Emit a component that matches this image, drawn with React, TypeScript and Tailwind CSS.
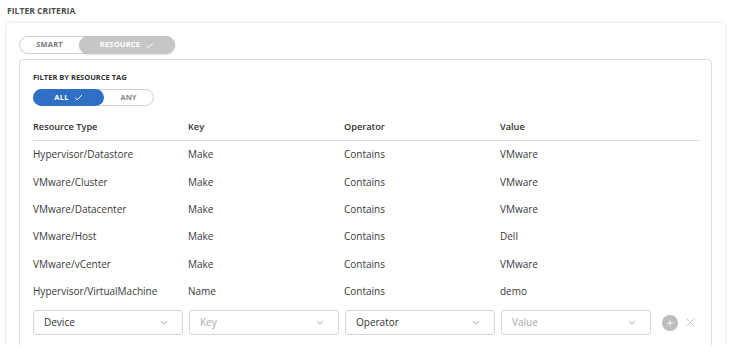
import React from 'react';

const rows = [
  ['Hypervisor/Datastore', 'Make', 'Contains', 'VMware'],
  ['VMware/Cluster', 'Make', 'Contains', 'VMware'],
  ['VMware/Datacenter', 'Make', 'Contains', 'VMware'],
  ['VMware/Host', 'Make', 'Contains', 'Dell'],
  ['VMware/vCenter', 'Make', 'Contains', 'VMware'],
  ['Hypervisor/VirtualMachine', 'Name', 'Contains', 'demo'],
];

function Check({ className }: { className?: string }) {
  return (
    <svg viewBox="0 0 12 10" className={className} fill="none" stroke="currentColor" strokeWidth="1.4">
      <path d="M1 5.2 L4.2 8.2 L11 1.5" />
    </svg>
  );
}

function Chevron() {
  return (
    <svg viewBox="0 0 10 6" className="w-[8px] h-[5px] text-[#999]" fill="none" stroke="currentColor" strokeWidth="1">
      <path d="M1 1 L5 5 L9 1" />
    </svg>
  );
}

function Select({ label, placeholder }: { label: string; placeholder?: boolean }) {
  return (
    <div className="w-[150px] h-[25px] border border-[#d6d6d6] rounded-[3px] flex items-center justify-between pl-[10px] pr-[14px] bg-white">
      <span className={`text-[10px] ${placeholder ? 'text-[#a8a8a8]' : 'text-[#333]'}`}>{label}</span>
      <Chevron />
    </div>
  );
}

export default function App() {
  return (
    <div className="w-[740px] h-[362px] bg-white overflow-hidden text-[#333]" style={{ fontFamily: '"Open Sans", "Noto Sans", sans-serif' }}>
      <div className="pl-[7px] pt-[4px] h-[18px] text-[8.6px] font-bold text-[#505050] leading-[14px]">
        FILTER CRITERIA
      </div>

      <div className="h-[327px] overflow-hidden pt-[5px] pl-[7px] pr-[15px]">
        <div className="h-[360px] bg-white rounded-[4px] shadow-[0_0_5px_rgba(0,0,0,0.13)] pt-[13px] pl-[12px] pr-[13px]">
          {/* Filter mode */}
          <div className="flex w-[156px] h-[18px] border border-[#cfcfcf] rounded-full">
            <div className="w-[59px] flex items-center justify-center text-[7.5px] font-bold text-[#777] tracking-[0.2px]">
              SMART
            </div>
            <div className="flex-1 -my-px -mr-px rounded-full bg-[#c6c6c6] flex items-center justify-center gap-[5px] text-[7.5px] font-bold text-white tracking-[0.2px] shadow-[0_1px_2px_rgba(0,0,0,0.12)]">
              RESOURCE
              <Check className="w-[9px] h-[7px]" />
            </div>
          </div>

          {/* Resource tag panel */}
          <div className="mt-[5px] h-[320px] border border-[#dcdcdc] rounded-[4px] pl-[13px] pr-[12px] pt-[11px]">
            <div className="text-[7.5px] font-bold text-[#333] leading-[12px]">
              FILTER BY RESOURCE TAG
            </div>
            <div className="mt-[6px] flex w-[121px] h-[17px] border border-[#cfcfcf] rounded-full">
              <div className="w-[71px] -my-px -ml-px rounded-full bg-[#2f6fc4] flex items-center justify-center gap-[5px] text-[7.5px] font-bold text-white tracking-[0.3px]">
                ALL
                <Check className="w-[9px] h-[7px]" />
              </div>
              <div className="flex-1 flex items-center justify-center text-[7.5px] font-bold text-[#888]">
                ANY
              </div>
            </div>

            <div className="mt-[8px] w-[666px]">
              <div className="grid grid-cols-[155px_156px_156px_1fr] h-[27px] items-center border-b border-[#dedede] text-[9.2px] font-semibold text-[#333]">
                <span>Resource Type</span>
                <span>Key</span>
                <span>Operator</span>
                <span>Value</span>
              </div>
              {rows.map((r) => (
                <div key={r[0]} className="grid grid-cols-[155px_156px_156px_1fr] h-[27.4px] items-center text-[10px] text-[#3a3a3a]">
                  {r.map((c, i) => (
                    <span key={i}>{c}</span>
                  ))}
                </div>
              ))}
              <div className="mt-[5px] flex items-center gap-[6px]">
                <Select label="Device" />
                <Select label="Key" placeholder />
                <Select label="Operator" />
                <Select label="Value" placeholder />
                <div className="ml-[5px] w-[16px] h-[16px] rounded-full bg-[#bdbdbd] flex items-center justify-center">
                  <svg viewBox="0 0 10 10" className="w-[8px] h-[8px]" stroke="white" strokeWidth="1">
                    <path d="M5 1 V9 M1 5 H9" />
                  </svg>
                </div>
                <svg viewBox="0 0 10 10" className="ml-[2px] w-[9px] h-[9px]" stroke="#c4c4c4" strokeWidth="1">
                  <path d="M1 1 L9 9 M9 1 L1 9" />
                </svg>
              </div>
            </div>
          </div>
        </div>
      </div>
    </div>
  );
}
